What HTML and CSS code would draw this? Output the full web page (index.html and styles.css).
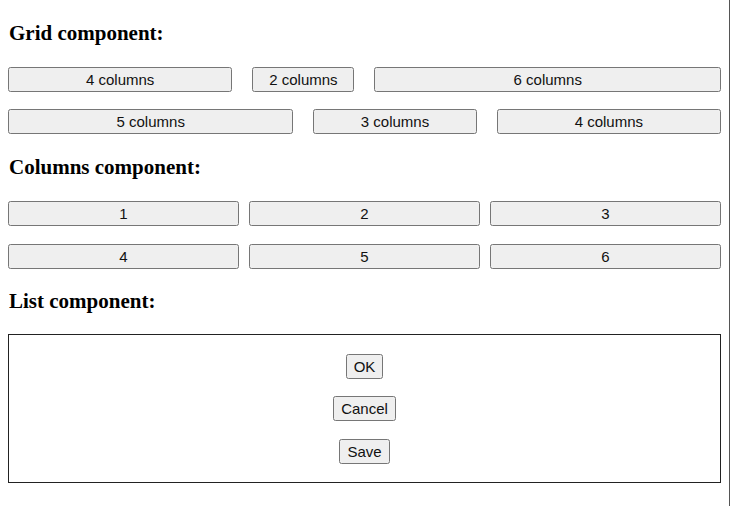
FILE: index.html
```html
<!DOCTYPE html>
<html lang="en">
<head>
    <meta charset="UTF-8">
    <meta name="viewport" content="width=device-width, initial-scale=1.0">
    <title>Layout components</title>
    <link rel="stylesheet" href="styles.css">
</head>
<body>
    <h3 class="first">Grid component:</h3>
    <div class="grid">
        <button class="span-4">4 columns</button>
        <button class="span-2">2 columns</button>
        <button class="span-6">6 columns</button>
        <button class="span-5">5 columns</button>
        <button class="span-3">3 columns</button>
        <button class="span-4">4 columns</button>
    </div>

    <h3>Columns component:</h3>
    <div class="columns">
        <button>1</button>
        <button>2</button>
        <button>3</button>
        <button>4</button>
        <button>5</button>
        <button>6</button>
    </div>

    <h3 class="last">List component:</h3>
    <div class="list">
        <button>OK</button>
        <button>Cancel</button>
        <button>Save</button>
    </div>
</body>
</html>
```

FILE: styles.css
```css
html {
    border-right: 1px solid #555;
    min-height: 100%;
}

body {
    margin: 0;
    padding: 0 8px 8px 8px;
    font-family: "Liberation Serif", serif;
}

h3 {
    font-size: 21px;
    margin: 21.5px 0 21px;
    padding-left: 1px;
}

h3.first {
    margin-top: 21px;
    margin-bottom: 20.5px;
}

h3.last {
    margin-top: 20px;
    margin-bottom: 20px;
}

button {
    font-family: "Liberation Sans", Arial, sans-serif;
    font-size: 15px;
    padding: 2px 6px;
    color: #111;
}

.grid {
    display: grid;
    grid-template-columns: repeat(12, 1fr);
    gap: 17px 20px;
}

.span-2 { grid-column: span 2; }
.span-3 { grid-column: span 3; }
.span-4 { grid-column: span 4; }
.span-5 { grid-column: span 5; }
.span-6 { grid-column: span 6; }

.columns {
    display: grid;
    grid-template-columns: repeat(3, 1fr);
    gap: 17.5px 10px;
}

.list {
    display: flex;
    flex-direction: column;
    align-items: center;
    gap: 17.5px;
    padding: 19px 0 18px;
    border: 1px solid #222;
}
```
